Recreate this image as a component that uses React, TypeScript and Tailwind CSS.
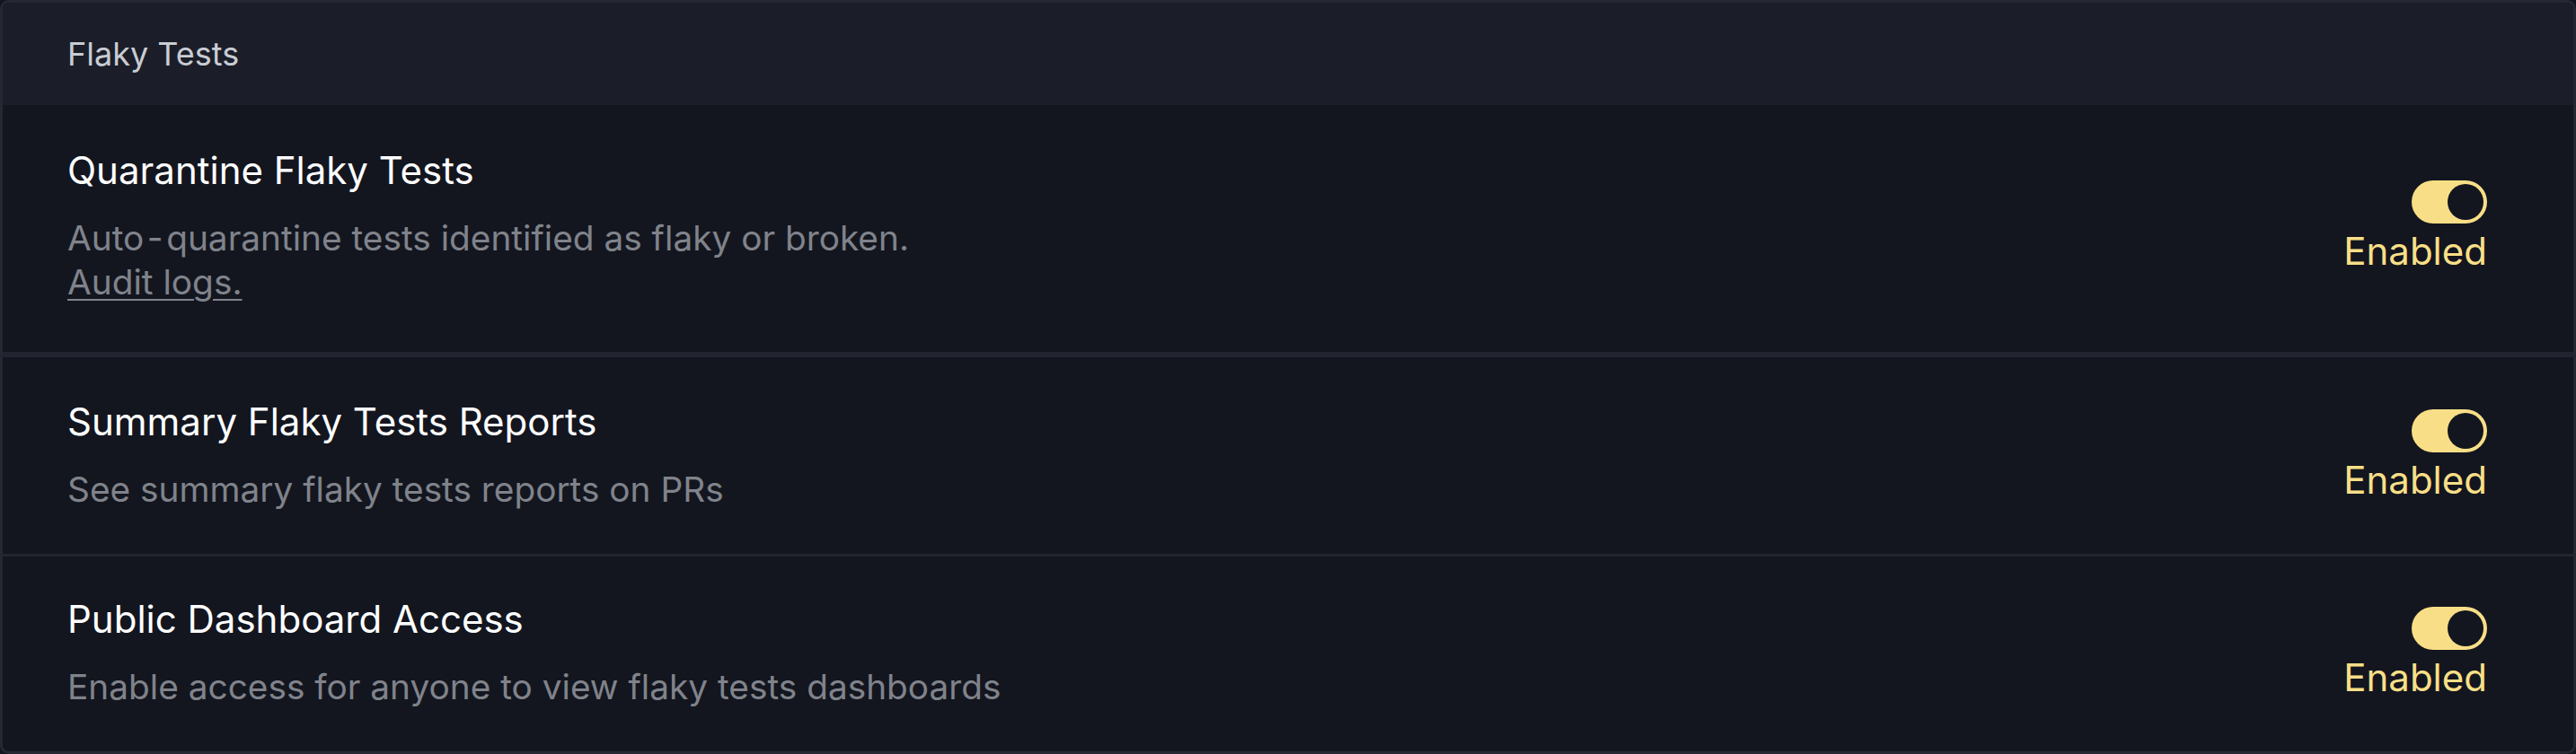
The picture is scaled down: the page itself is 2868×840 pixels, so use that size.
import React from "react";

const settings = [
  {
    title: "Quarantine Flaky Tests",
    description: "Auto\u200a-\u200aquarantine tests identified as flaky or broken.",
    link: "Audit logs.",
    rowClass: "pt-[49px] pb-[54px]",
  },
  {
    title: "Summary Flaky Tests Reports",
    description: "See summary flaky tests reports on PRs",
    rowClass: "pt-[48px] pb-[48px]",
  },
  {
    title: "Public Dashboard Access",
    description: "Enable access for anyone to view flaky tests dashboards",
    rowClass: "pt-[46px] pb-[48px]",
  },
];

function Toggle() {
  return (
    <div className="flex h-[48px] w-[84px] items-center justify-end rounded-full bg-[#f8df87] p-[4px]">
      <div className="h-[40px] w-[40px] rounded-full bg-[#13161f]" />
    </div>
  );
}

export default function App() {
  return (
    <div
      className="h-[840px] w-full bg-[#13161f]"
      style={{ fontFamily: "Inter, 'Noto Sans', sans-serif" }}
    >
      <div className="flex h-full flex-col overflow-hidden rounded-[10px] border-[3px] border-[#252833]">
        <div className="flex h-[114px] shrink-0 items-center bg-[#1b1e29] pl-[72px]">
          <span className="text-[36px] leading-[44px] text-[#c9ccd3]">
            Flaky Tests
          </span>
        </div>

        {settings.map((s, i) => (
          <div
            key={s.title}
            className={`flex items-center justify-between bg-[#13161f] pl-[72px] pr-[96px] ${s.rowClass} ${
              i === 0
                ? "border-b-[6px] border-[#22252f]"
                : i === 1
                  ? "border-b-[3px] border-[#22252f]"
                  : ""
            }`}
          >
            <div className="flex flex-col">
              <h3 className="text-[42px] leading-[48px] font-normal text-white">
                {s.title}
              </h3>
              <p className="mt-[26px] text-[38.8px] leading-[49px] text-[#80838b]">
                {s.description}
                {s.link && (
                  <>
                    <br />
                    <a
                      href="#"
                      className="underline decoration-[2px] underline-offset-[5px]"
                    >
                      {s.link}
                    </a>
                  </>
                )}
              </p>
            </div>

            <div className="flex flex-col items-end gap-[7px]">
              <Toggle />
              <span className="text-[42px] leading-[48px] text-[#f8df87]">
                Enabled
              </span>
            </div>
          </div>
        ))}
      </div>
    </div>
  );
}
